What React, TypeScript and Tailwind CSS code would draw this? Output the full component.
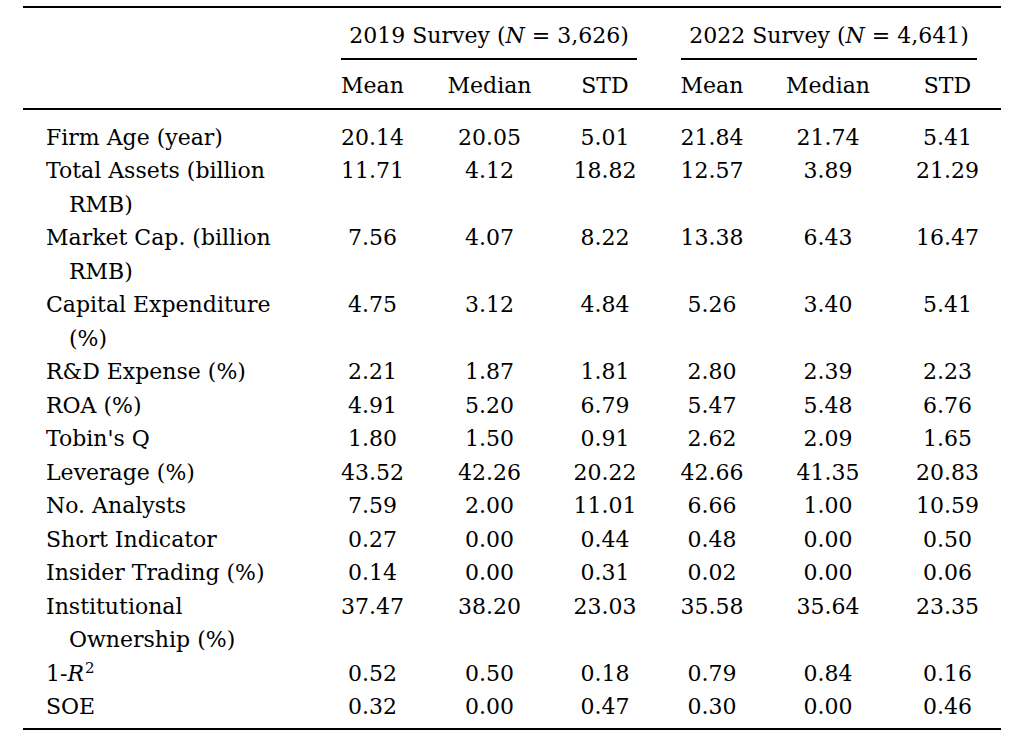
import React from "react";

type Row = { label: React.ReactNode[]; values: string[] };

const rows: Row[] = [
  { label: ["Firm Age (year)"], values: ["20.14", "20.05", "5.01", "21.84", "21.74", "5.41"] },
  { label: ["Total Assets (billion", "RMB)"], values: ["11.71", "4.12", "18.82", "12.57", "3.89", "21.29"] },
  { label: ["Market Cap. (billion", "RMB)"], values: ["7.56", "4.07", "8.22", "13.38", "6.43", "16.47"] },
  { label: ["Capital Expenditure", "(%)"], values: ["4.75", "3.12", "4.84", "5.26", "3.40", "5.41"] },
  { label: ["R&D Expense (%)"], values: ["2.21", "1.87", "1.81", "2.80", "2.39", "2.23"] },
  { label: ["ROA (%)"], values: ["4.91", "5.20", "6.79", "5.47", "5.48", "6.76"] },
  { label: ["Tobin's Q"], values: ["1.80", "1.50", "0.91", "2.62", "2.09", "1.65"] },
  { label: ["Leverage (%)"], values: ["43.52", "42.26", "20.22", "42.66", "41.35", "20.83"] },
  { label: ["No. Analysts"], values: ["7.59", "2.00", "11.01", "6.66", "1.00", "10.59"] },
  { label: ["Short Indicator"], values: ["0.27", "0.00", "0.44", "0.48", "0.00", "0.50"] },
  { label: ["Insider Trading (%)"], values: ["0.14", "0.00", "0.31", "0.02", "0.00", "0.06"] },
  { label: ["Institutional", "Ownership (%)"], values: ["37.47", "38.20", "23.03", "35.58", "35.64", "23.35"] },
  {
    label: [
      <span key="r">
        1-<i>R</i>
        <sup className="text-[15px] ml-[1px]">2</sup>
      </span>,
    ],
    values: ["0.52", "0.50", "0.18", "0.79", "0.84", "0.16"],
  },
  { label: ["SOE"], values: ["0.32", "0.00", "0.47", "0.30", "0.00", "0.46"] },
];

const grid = "grid grid-cols-[291px_117px_117px_114px_100px_132px_107px]";

export default function App() {
  return (
    <div className="w-[1022px] h-[740px] bg-white text-black font-['DejaVu_Serif',serif] text-[22px] leading-[33.5px]">
      <div className="ml-[23px] w-[978px] pt-[6px]">
        <div className="border-t-[2.5px] border-black" />
        {/* Group headers */}
        <div className={grid}>
          <div />
          <div className="col-span-3 pt-[11px]">
            <div className="ml-[27px] mr-[25px] text-center pb-[5px] border-b-2 border-black whitespace-nowrap">
              2019 Survey (<i>N</i> = 3,626)
            </div>
          </div>
          <div className="col-span-3 pt-[11px]">
            <div className="ml-[19px] mr-[24px] text-center pb-[5px] border-b-2 border-black whitespace-nowrap">
              2022 Survey (<i>N</i> = 4,641)
            </div>
          </div>
        </div>
        {/* Sub headers */}
        <div className={`${grid} pt-[9px] pb-[5.5px] border-b-2 border-black`}>
          <div />
          {["Mean", "Median", "STD", "Mean", "Median", "STD"].map((h, i) => (
            <div key={i} className="text-center">
              {h}
            </div>
          ))}
        </div>
        {/* Body */}
        <div className="pt-[11px] pb-[4.5px] border-b-[2.5px] border-black">
          {rows.map((r, i) => (
            <div key={i} className={grid}>
              <div className="pl-[23px]">
                {r.label.map((l, j) => (
                  <div key={j} className={j > 0 ? "pl-[23px] whitespace-nowrap" : "whitespace-nowrap"}>
                    {l}
                  </div>
                ))}
              </div>
              {r.values.map((v, j) => (
                <div key={j} className="text-center">
                  {v}
                </div>
              ))}
            </div>
          ))}
        </div>
      </div>
    </div>
  );
}
